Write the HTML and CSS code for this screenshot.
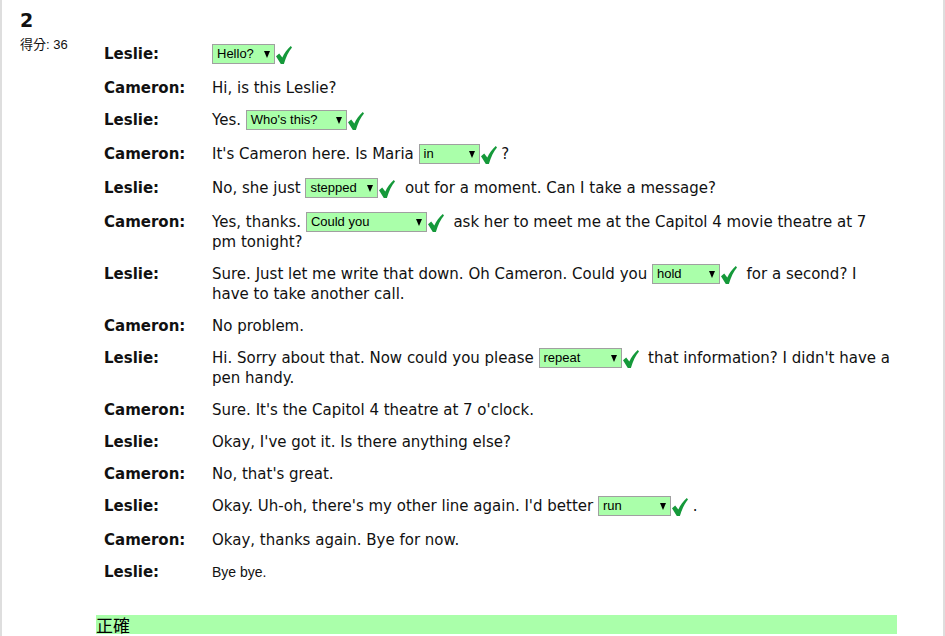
FILE: index.html
```html
<!DOCTYPE html>
<html lang="en">
<head>
<meta charset="utf-8">
<title>Question 2</title>
<link rel="stylesheet" href="styles.css">
</head>
<body>
<div class="page">
  <div class="side">
    <div class="qno">2</div>
    <div class="score">得分: 36</div>
  </div>
  <div class="main">
    <div class="dialog">
      <div class="row r-sel"><div class="who">Leslie:</div><div class="say"><span class="sel w63"><span class="opt">Hello?</span><span class="arr"></span></span><svg class="ok" viewBox="0 0 16 18"><path d="M0 10.2 L3.2 7.6 L6.3 11.4 C8.3 7 11.3 3 14.8 0 L16 1.6 C12.6 5.6 10 11 7.9 18 L4.8 18 Z"/></svg></div></div>
      <div class="row"><div class="who">Cameron:</div><div class="say">Hi, is this Leslie?</div></div>
      <div class="row r-sel"><div class="who">Leslie:</div><div class="say">Yes. <span class="sel w101"><span class="opt">Who's this?</span><span class="arr"></span></span><svg class="ok" viewBox="0 0 16 18"><path d="M0 10.2 L3.2 7.6 L6.3 11.4 C8.3 7 11.3 3 14.8 0 L16 1.6 C12.6 5.6 10 11 7.9 18 L4.8 18 Z"/></svg></div></div>
      <div class="row r-sel"><div class="who">Cameron:</div><div class="say">It's Cameron here. Is Maria <span class="sel w61"><span class="opt">in</span><span class="arr"></span></span><svg class="ok" viewBox="0 0 16 18"><path d="M0 10.2 L3.2 7.6 L6.3 11.4 C8.3 7 11.3 3 14.8 0 L16 1.6 C12.6 5.6 10 11 7.9 18 L4.8 18 Z"/></svg> ?</div></div>
      <div class="row r-sel"><div class="who">Leslie:</div><div class="say">No, she just <span class="sel w73"><span class="opt">stepped</span><span class="arr"></span></span><svg class="ok" viewBox="0 0 16 18"><path d="M0 10.2 L3.2 7.6 L6.3 11.4 C8.3 7 11.3 3 14.8 0 L16 1.6 C12.6 5.6 10 11 7.9 18 L4.8 18 Z"/></svg>&nbsp; out for a moment. Can I take a message?</div></div>
      <div class="row r-sel"><div class="who">Cameron:</div><div class="say">Yes, thanks. <span class="sel w121"><span class="opt">Could you</span><span class="arr"></span></span><svg class="ok" viewBox="0 0 16 18"><path d="M0 10.2 L3.2 7.6 L6.3 11.4 C8.3 7 11.3 3 14.8 0 L16 1.6 C12.6 5.6 10 11 7.9 18 L4.8 18 Z"/></svg>&nbsp; ask her to meet me at the Capitol 4 movie theatre at 7 pm tonight?</div></div>
      <div class="row r-sel"><div class="who">Leslie:</div><div class="say">Sure. Just let me write that down. Oh Cameron. Could you <span class="sel w68"><span class="opt">hold</span><span class="arr"></span></span><svg class="ok" viewBox="0 0 16 18"><path d="M0 10.2 L3.2 7.6 L6.3 11.4 C8.3 7 11.3 3 14.8 0 L16 1.6 C12.6 5.6 10 11 7.9 18 L4.8 18 Z"/></svg>&nbsp; for a second? I have to take another call.</div></div>
      <div class="row"><div class="who">Cameron:</div><div class="say">No problem.</div></div>
      <div class="row r-sel"><div class="who">Leslie:</div><div class="say">Hi. Sorry about that. Now could you please <span class="sel w83"><span class="opt">repeat</span><span class="arr"></span></span><svg class="ok" viewBox="0 0 16 18"><path d="M0 10.2 L3.2 7.6 L6.3 11.4 C8.3 7 11.3 3 14.8 0 L16 1.6 C12.6 5.6 10 11 7.9 18 L4.8 18 Z"/></svg>&nbsp; that information? I didn't have a pen handy.</div></div>
      <div class="row"><div class="who">Cameron:</div><div class="say">Sure. It's the Capitol 4 theatre at 7 o'clock.</div></div>
      <div class="row"><div class="who">Leslie:</div><div class="say">Okay, I've got it. Is there anything else?</div></div>
      <div class="row"><div class="who">Cameron:</div><div class="say">No, that's great.</div></div>
      <div class="row r-sel"><div class="who">Leslie:</div><div class="say">Okay. Uh-oh, there's my other line again. I'd better <span class="sel w73"><span class="opt">run</span><span class="arr"></span></span><svg class="ok" viewBox="0 0 16 18"><path d="M0 10.2 L3.2 7.6 L6.3 11.4 C8.3 7 11.3 3 14.8 0 L16 1.6 C12.6 5.6 10 11 7.9 18 L4.8 18 Z"/></svg> .</div></div>
      <div class="row"><div class="who">Cameron:</div><div class="say">Okay, thanks again. Bye for now.</div></div>
      <div class="row"><div class="who">Leslie:</div><div class="say"><span class="plain">Bye bye.</span></div></div>
    </div>
    <div class="feedback">正確</div>
  </div>
</div>
</body>
</html>
```

FILE: styles.css
```css
html, body {
  margin: 0;
  padding: 0;
  background: #fff;
}
body {
  font-family: "DejaVu Sans", Verdana, sans-serif;
  color: #111;
}
.page {
  display: flex;
  box-sizing: border-box;
  width: 945px;
  min-height: 636px;
  border-left: 2px solid #dedede;
  border-right: 2px solid #dedede;
}
.side {
  width: 76px;
  flex: none;
  padding: 10px 0 0 18px;
}
.qno {
  font-weight: bold;
  font-size: 19px;
  line-height: 20px;
}
.score {
  margin-top: 8px;
  font-family: "Liberation Sans", Arial, "Noto Sans CJK TC", sans-serif;
  font-size: 13px;
  line-height: 14px;
}
.main {
  width: 801px;
  flex: none;
  padding-top: 38px;
}
.dialog {
  padding: 0 5px 0 8px;
}
.row {
  display: flex;
  padding: 6px 0;
}
.who {
  width: 108px;
  flex: none;
  font-weight: bold;
  font-size: 15px;
  line-height: 20px;
}
.say {
  flex: 1;
  font-size: 15px;
  line-height: 20px;
}
.r-sel .say {
  min-height: 22px;
}
.plain {
  font-family: "Liberation Sans", Arial, sans-serif;
  font-size: 14px;
}
.sel {
  display: inline-flex;
  align-items: center;
  justify-content: space-between;
  box-sizing: border-box;
  height: 20px;
  padding: 0 4px 0 4px;
  vertical-align: top;
  background: #aaffaa;
  border: 1px solid #a0a0a0;
  font-family: "Liberation Sans", Arial, sans-serif;
  font-size: 13px;
  line-height: 18px;
  color: #000;
}
.arr {
  width: 0;
  height: 0;
  border-left: 3.5px solid transparent;
  border-right: 3.5px solid transparent;
  border-top: 7px solid #000;
}
.w61 { width: 61px; }
.w63 { width: 63px; }
.w68 { width: 68px; }
.w73 { width: 73px; }
.w83 { width: 83px; }
.w101 { width: 101px; }
.w121 { width: 121px; }
.ok {
  width: 16px;
  height: 18px;
  margin-left: 1px;
  margin-top: 2px;
  vertical-align: top;
  fill: #15993a;
}
.feedback {
  margin-top: 27px;
  background: #aaffaa;
  font-family: "Noto Sans CJK TC", sans-serif;
  font-size: 17px;
  line-height: 19px;
  color: #000;
}
```
